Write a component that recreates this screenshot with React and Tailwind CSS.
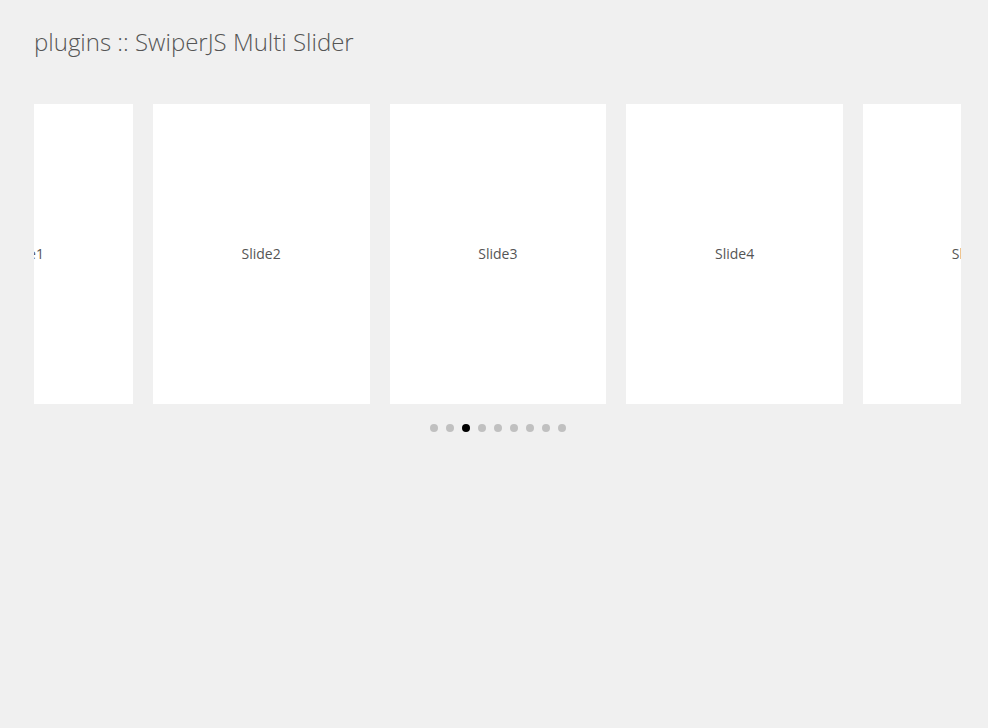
export default function App() {
  const slides = [1, 2, 3, 4, 5];
  const dots = [0, 1, 2, 3, 4, 5, 6, 7, 8];
  return (
    <div className="min-h-[728px] w-full bg-[#f0f0f0] px-[34px] pt-[26px]" style={{ fontFamily: '"Open Sans", sans-serif' }}>
      <h1 className="text-[24px] font-light leading-[32px] text-[#555]">plugins :: SwiperJS Multi Slider</h1>
      <div className="mt-[46px] w-[927px] overflow-hidden">
        <div className="flex gap-[20px] ml-[-118px]">
          {slides.map((n) => (
            <div key={n} className="flex h-[300px] w-[216.75px] shrink-0 items-center justify-center bg-white pb-[2px] text-[14px] text-[#555]">
              Slide{n}
            </div>
          ))}
        </div>
      </div>
      <div className="mt-[20px] flex w-[927px] justify-center gap-[8px]">
        {dots.map((i) => (
          <span key={i} className={"block h-[8px] w-[8px] rounded-full " + (i === 2 ? "bg-black" : "bg-[#c0c0c0]")} />
        ))}
      </div>
    </div>
  );
}
